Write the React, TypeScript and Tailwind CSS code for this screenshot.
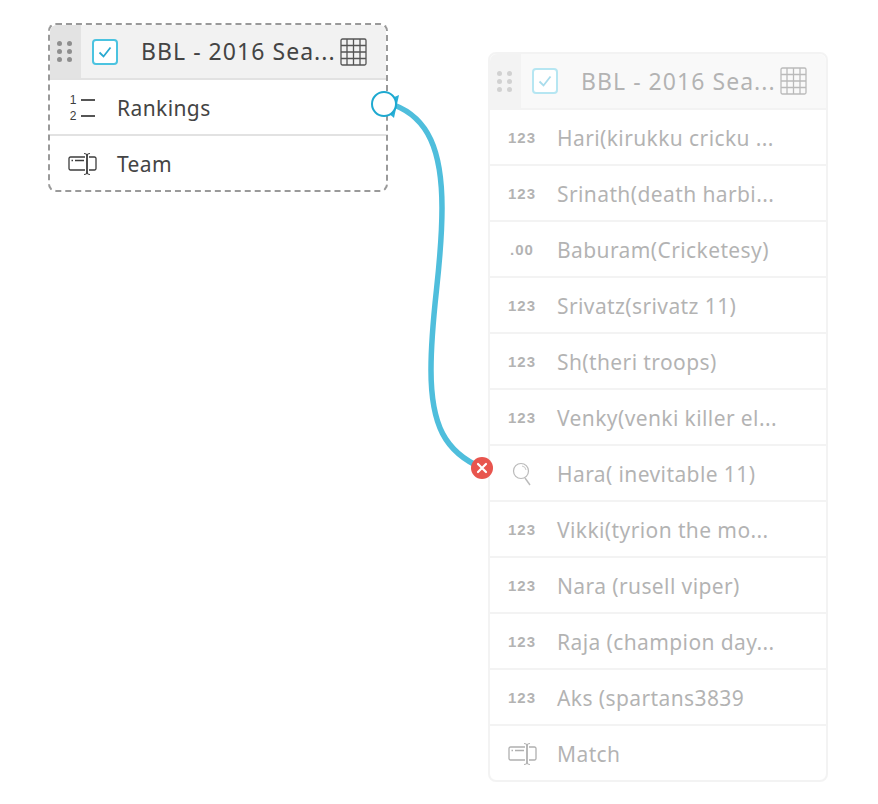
type Field = { name: string; icon: 'num' | 'dec' | 'geo' | 'text' | 'rank' };

const leftFields: Field[] = [
  { name: 'Rankings', icon: 'rank' },
  { name: 'Team', icon: 'text' },
];

const rightFields: Field[] = [
  { name: 'Hari(kirukku cricku ...', icon: 'num' },
  { name: 'Srinath(death harbi...', icon: 'num' },
  { name: 'Baburam(Cricketesy)', icon: 'dec' },
  { name: 'Srivatz(srivatz 11)', icon: 'num' },
  { name: 'Sh(theri troops)', icon: 'num' },
  { name: 'Venky(venki killer el...', icon: 'num' },
  { name: 'Hara( inevitable 11)', icon: 'geo' },
  { name: 'Vikki(tyrion the mo...', icon: 'num' },
  { name: 'Nara (rusell viper)', icon: 'num' },
  { name: 'Raja (champion day...', icon: 'num' },
  { name: 'Aks (spartans3839', icon: 'num' },
  { name: 'Match', icon: 'text' },
];

function TextIcon() {
  return (
    <svg width="30" height="24" viewBox="0 0 30 24" fill="none" stroke="#3c3c3c" strokeWidth="1.300" className="translate-x-[1px] translate-y-[1px]">
      <path d="M21 5H26.500a1.500 1.500 0 0 1 1.500 1.500V16.500a1.500 1.500 0 0 1-1.500 1.500H21M17 18H2.500a1.500 1.500 0 0 1-1.500-1.500V6.500a1.500 1.500 0 0 1 1.500-1.500H17" />
      <path d="M3.500 8.500H5M7 8.500H16" />
      <path d="M19 2.500V21.500" strokeWidth="1.800" />
      <path d="M16 1.500C17.500 1.500 18.500 2 19 3C19.500 2 20.500 1.500 22 1.500M16 22.500C17.500 22.500 18.500 22 19 21C19.500 22 20.500 22.500 22 22.500" strokeWidth="1.200" />
    </svg>
  );
}

function RankIcon() {
  return (
    <div className="grid grid-cols-[7px_14px] gap-x-[4px] items-center font-['Liberation_Sans',sans-serif] text-[12px] leading-[16px] text-[#3c3c3c] w-[25px] translate-y-[1px]">
      <span className="text-center">1</span>
      <span className="h-[2px] bg-[#555]" />
      <span className="text-center">2</span>
      <span className="h-[2px] bg-[#555]" />
    </div>
  );
}

function GeoIcon() {
  return (
    <svg width="22" height="26" viewBox="0 0 22 26" fill="none" stroke="#555" strokeWidth="1.200" className="translate-y-[1px]">
      <circle cx="10" cy="10" r="7.500" />
      <path d="M11 5a4.500 4.500 0 0 1 4 4" strokeWidth="0.800" />
      <path d="M14 17L19 24" strokeWidth="1.400" />
    </svg>
  );
}

function FieldIcon({ kind }: { kind: Field['icon'] }) {
  if (kind === 'rank') return <RankIcon />;
  if (kind === 'text') return <TextIcon />;
  if (kind === 'geo') return <GeoIcon />;
  return (
    <span className="font-['Liberation_Sans',sans-serif] font-bold text-[15px] tracking-[1px] text-[#444] translate-y-[1px]">
      {kind === 'num' ? '123' : '.00'}
    </span>
  );
}

function TableIcon() {
  return (
    <svg width="27" height="28" viewBox="0 0 27 28" fill="none" stroke="#555" strokeWidth="1.300">
      <rect x="1" y="1" width="25" height="26" rx="1.500" />
      <path d="M1 7.500H26M1 14H26M1 20.500H26M7 1V27M13.500 1V27M20 1V27" />
    </svg>
  );
}

function TableCard({ fields, className, headerHeight }: { fields: Field[]; className: string; headerHeight: string }) {
  return (
    <div className={`absolute w-[340px] bg-white rounded-[8px] ${className}`}>
      <div className={`flex items-stretch bg-[#f2f2f2] border-b-2 border-[#e2e2e2] rounded-t-[7px] ${headerHeight}`}>
        <div className="w-[31px] shrink-0 bg-[#e3e3e3] rounded-tl-[7px] flex items-center justify-center pr-[3px]">
          <div className="grid grid-cols-2 gap-x-[5px] gap-y-[3px]">
            {[0, 1, 2, 3, 4, 5].map(i => (
              <span key={i} className="w-[5px] h-[5px] rounded-full bg-[#8e8e8e]" />
            ))}
          </div>
        </div>
        <div className="flex items-center flex-1 pl-[11px]">
          <div className="w-[26px] h-[26px] border-2 border-[#4bc3e0] rounded-[4px] bg-white flex items-center justify-center">
            <svg width="16" height="14" viewBox="0 0 16 14" fill="none" stroke="#29a9d0" strokeWidth="1.800">
              <path d="M2.500 7.500L6.500 11.500L13.500 2.500" />
            </svg>
          </div>
          <span className="ml-[23px] w-[199px] text-[23px] tracking-[1.05px] text-[#444] whitespace-nowrap">BBL - 2016 Sea...</span>
          <TableIcon />
        </div>
      </div>
      {fields.map((f, i) => (
        <div
          key={f.name}
          className={`flex items-center ${i < fields.length - 1 ? 'h-[56px] border-b-2 border-[#e2e2e2]' : 'h-[54px]'}`}
        >
          <div className="w-[64px] shrink-0 flex justify-center">
            <FieldIcon kind={f.icon} />
          </div>
          <span className="ml-[3px] text-[21px] tracking-[0.4px] text-[#444] whitespace-nowrap translate-y-[2px]">{f.name}</span>
        </div>
      ))}
    </div>
  );
}

export default function App() {
  return (
    <div className="relative w-[878px] h-[804px] bg-white overflow-hidden font-['Noto_Sans',sans-serif]">
      <TableCard
        fields={rightFields}
        headerHeight="h-[56px]"
        className="left-[488px] top-[52px] border-2 border-[#e2e2e2] opacity-40"
      />
      <TableCard
        fields={leftFields}
        headerHeight="h-[55px]"
        className="left-[48px] top-[23px] border-2 border-dashed border-[#9a9a9a]"
      />

      {/* connector */}
      <svg className="absolute left-0 top-0" width="878" height="804" fill="none">
        <path
          d="M394 105C428 118 442 150 442 208C442 270 431 310 431 370C431 425 445 452 482 468"
          stroke="#4fbedc"
          strokeWidth="5.500"
        />
        <path d="M399 95L394 118L378 104Z" fill="#29b0d8" />
        <circle cx="384" cy="104" r="12" fill="white" stroke="#1ea9d0" strokeWidth="2" />
      </svg>

      {/* remove link */}
      <div className="absolute left-[471px] top-[457px] w-[22px] h-[22px] rounded-full bg-[#e8554e] flex items-center justify-center">
        <svg width="12" height="12" viewBox="0 0 12 12" stroke="white" strokeWidth="2.200" strokeLinecap="round">
          <path d="M2 2L10 10M10 2L2 10" />
        </svg>
      </div>
    </div>
  );
}
